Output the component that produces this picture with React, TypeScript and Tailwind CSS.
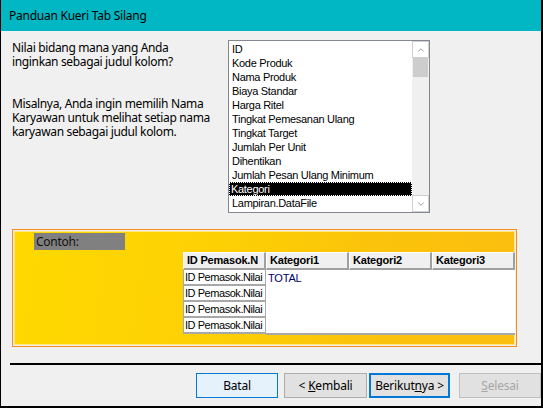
import { ChevronDown, ChevronUp } from 'lucide-react';

const fields = [
    'ID',
    'Kode Produk',
    'Nama Produk',
    'Biaya Standar',
    'Harga Ritel',
    'Tingkat Pemesanan Ulang',
    'Tingkat Target',
    'Jumlah Per Unit',
    'Dihentikan',
    'Jumlah Pesan Ulang Minimum',
    'Kategori',
    'Lampiran.DataFile',
];

const headers = ['ID Pemasok.N', 'Kategori1', 'Kategori2', 'Kategori3'];

const classic = { fontFamily: '"Liberation Sans", Arial, sans-serif' };

export default function App() {
    return (
        <div
            className="flex h-[408px] w-[543px] flex-col border-r-2 border-b-2 border-l border-black bg-[#f0f0f0] text-black"
            style={{ fontFamily: '"Noto Sans", "Open Sans", sans-serif' }}
        >
            {/* Title bar */}
            <div className="flex h-[31px] shrink-0 items-center bg-[#00b7c3] pl-[8px] text-[12px] tracking-[-0.25px]">
                Panduan Kueri Tab Silang
            </div>

            {/* Top: question + field list */}
            <div className="mt-[9px] flex">
                <div className="w-[227px] shrink-0 pl-[11px] text-[12px] leading-[14px] tracking-[-0.35px] whitespace-nowrap">
                    <p className="mt-px">
                        Nilai bidang mana yang Anda
                        <br />
                        inginkan sebagai judul kolom?
                    </p>
                    <p className="mt-[28px]">
                        Misalnya, Anda ingin memilih Nama
                        <br />
                        Karyawan untuk melihat setiap nama
                        <br />
                        karyawan sebagai judul kolom.
                    </p>
                </div>

                <div className="flex h-[173px] w-[202px] shrink-0 border border-[#828790] bg-white">
                    <ul className="flex-1 pt-px text-[11px] leading-[14px] tracking-[-0.3px]" style={classic}>
                        {fields.map((f) => (
                            <li
                                key={f}
                                className={
                                    f === 'Kategori'
                                        ? 'h-[14px] bg-black pl-[2px] text-white outline-1 outline-dotted outline-white -outline-offset-1'
                                        : 'h-[14px] pl-[3px]'
                                }
                            >
                                {f}
                            </li>
                        ))}
                    </ul>
                    <div className="flex w-[17px] flex-col bg-[#f0f0f0]">
                        <div className="flex h-[17px] items-center justify-center border border-[#cfcfcf] bg-white text-[#606060]">
                            <ChevronUp size={10} strokeWidth={1.5} />
                        </div>
                        <div className="mx-px h-[19px] bg-[#cdcdcd]" />
                        <div className="flex-1" />
                        <div className="flex h-[17px] items-center justify-center border border-[#cfcfcf] bg-white text-[#606060]">
                            <ChevronDown size={10} strokeWidth={1.5} />
                        </div>
                    </div>
                </div>
            </div>

            {/* Sample panel */}
            <div className="mt-[16px] ml-[11px] h-[118px] w-[505px] border border-[#f58a1f] p-px">
                <div className="h-full w-full border border-[#ffe680] bg-[linear-gradient(100deg,#ffd900_0%,#fdd004_40%,#fbc30a_70%,#fbbf10_100%)]">
                    <div className="mt-px ml-[19px] flex h-[17px] w-[91px] items-center bg-[#808080] pl-[2px] text-[12px] tracking-[-0.25px] text-[#111]">
                        Contoh:
                    </div>
                    <div className="mt-[2px] ml-[168px] w-[332px] text-[11px] tracking-[-0.2px]" style={classic}>
                        <div className="flex h-[18px]">
                            {headers.map((h) => (
                                <div
                                    key={h}
                                    className="flex h-[18px] w-[83px] items-center overflow-hidden border-t border-l border-r-2 border-b-2 border-t-white border-l-white border-r-[#a0a0a0] border-b-[#a0a0a0] bg-[#f0f0f0] pl-[3px] font-bold whitespace-nowrap"
                                >
                                    {h}
                                </div>
                            ))}
                        </div>
                        <div className="flex">
                            <div className="flex w-[83px] flex-col">
                                {[0, 1, 2, 3].map((i) => (
                                    <div
                                        key={i}
                                        className="flex h-[16px] items-center overflow-hidden border-x border-b-2 border-[#a8a8a8] bg-white pl-px tracking-[-0.45px] whitespace-nowrap"
                                    >
                                        ID Pemasok.Nilai
                                    </div>
                                ))}
                            </div>
                            <div className="h-[65px] flex-1 border-b-2 border-[#a8a8a8] bg-white pl-[2px] leading-[16px] text-[#000070]">
                                TOTAL
                            </div>
                        </div>
                    </div>
                </div>
            </div>

            {/* Separator */}
            <div className="mt-[16px] ml-[9px] h-[2px] bg-black" />

            {/* Buttons */}
            <div className="mt-[8px] flex text-[12px] tracking-[-0.2px]">
                <button
                    type="button"
                    className="ml-[195px] h-[25px] w-[82px] border border-[#0078d7] bg-[#e5f1fb]"
                >
                    Batal
                </button>
                <button
                    type="button"
                    className="ml-[6px] h-[25px] w-[83px] border border-[#adadad] bg-[#e1e1e1]"
                >
                    &lt; <span className="underline">K</span>embali
                </button>
                <button
                    type="button"
                    className="ml-[2px] h-[25px] w-[81px] border-2 border-[#0078d7] bg-[#e1e1e1]"
                >
                    Berikut<span className="underline">n</span>ya &gt;
                </button>
                <button
                    type="button"
                    className="ml-[9px] h-[25px] w-[82px] border border-[#bfbfbf] bg-[#e1e1e1] text-[#a6a6a6]"
                >
                    <span className="underline">S</span>elesai
                </button>
            </div>
        </div>
    );
}
